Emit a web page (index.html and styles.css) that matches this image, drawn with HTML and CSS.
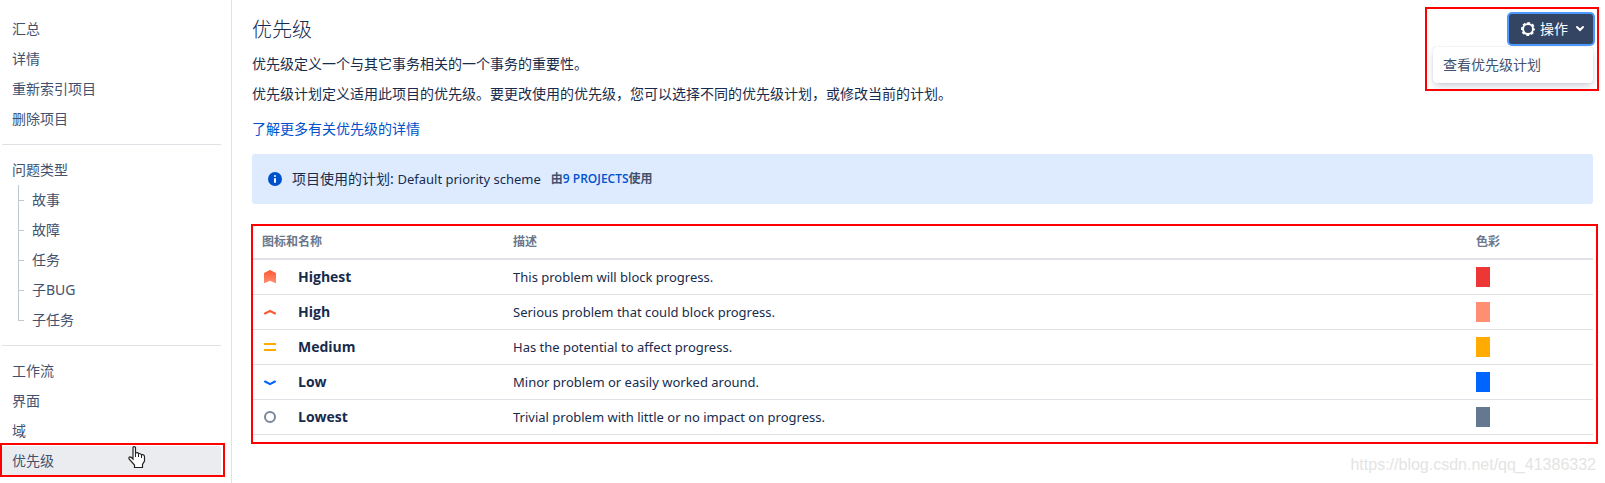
FILE: index.html
```html
<!DOCTYPE html>
<html lang="zh-CN">
<head>
    <meta charset="UTF-8">
    <meta name="viewport" content="width=device-width, initial-scale=1.0">
    <title>优先级</title>
    <link rel="stylesheet" href="styles.css">
</head>
<body>
    <nav class="sidebar">
        <ul class="nav-group">
            <li><a href="#">汇总</a></li>
            <li><a href="#">详情</a></li>
            <li><a href="#">重新索引项目</a></li>
            <li><a href="#">删除项目</a></li>
        </ul>
        <ul class="nav-group">
            <li>
                <a href="#">问题类型</a>
                <ul class="tree">
                    <li><a href="#">故事</a></li>
                    <li><a href="#">故障</a></li>
                    <li><a href="#">任务</a></li>
                    <li><a href="#">子BUG</a></li>
                    <li><a href="#">子任务</a></li>
                </ul>
            </li>
        </ul>
        <ul class="nav-group">
            <li><a href="#">工作流</a></li>
            <li><a href="#">界面</a></li>
            <li><a href="#">域</a></li>
            <li class="selected">
                <a href="#">优先级</a>
                <svg class="pointer" width="18" height="23" viewBox="0 0 18 23">
                    <path d="M5 1.5Q5 .7 6 .7T7.500 1.500V7Q10 6 10.500 7.700Q12.500 7 13.300 8.700Q16.500 8 16.500 11V15L14.500 18.500V21.500H6.500V19L1.500 13.500Q.3 11.500 1.500 11Q3 10.700 5 13Z" fill="#fff" stroke="#222" stroke-width="1.200"/>
                    <path d="M7.500 7V11M10.500 8V11M13.500 9V12" fill="none" stroke="#222"/>
                </svg>
            </li>
        </ul>
    </nav>

    <main class="content">
        <header class="page-header">
            <h1>优先级</h1>
            <div class="actions">
                <button class="actions-btn" type="button">
                    <svg width="16" height="16" viewBox="0 0 16 16">
                        <circle cx="8" cy="8" r="5" fill="none" stroke="#fff" stroke-width="2"/>
                        <circle cx="8" cy="8" r="6" fill="none" stroke="#fff" stroke-width="2" stroke-dasharray="2.700 2.012" stroke-dashoffset="1.350"/>
                    </svg>
                    <span>操作</span>
                    <svg class="arrow" width="10" height="8" viewBox="0 0 10 8">
                        <path d="M2 2L5 5L8 2" fill="none" stroke="#fff" stroke-width="2" stroke-linecap="round"/>
                    </svg>
                </button>
                <div class="menu"><a href="#">查看优先级计划</a></div>
            </div>
        </header>

        <p>优先级定义一个与其它事务相关的一个事务的重要性。</p>
        <p>优先级计划定义适用此项目的优先级。要更改使用的优先级，您可以选择不同的优先级计划，或修改当前的计划。</p>
        <p class="more"><a href="#">了解更多有关优先级的详情</a></p>

        <div class="banner">
            <svg width="14" height="14" viewBox="0 0 14 14">
                <circle cx="7" cy="7" r="7" fill="#0052cc"/>
                <circle cx="7" cy="4" r="1" fill="#fff"/>
                <rect x="6" y="6" width="2" height="5" rx="1" fill="#fff"/>
            </svg>
            <span class="scheme">项目使用的计划: <span class="scheme-name">Default priority scheme</span></span>
            <span class="used-by">由<a href="#">9 PROJECTS</a>使用</span>
        </div>

        <div class="table-wrap">
            <table>
                <colgroup>
                    <col class="col-icon">
                    <col class="col-name">
                    <col>
                    <col class="col-color">
                </colgroup>
                <thead>
                    <tr>
                        <th colspan="2">图标和名称</th>
                        <th>描述</th>
                        <th>色彩</th>
                    </tr>
                </thead>
                <tbody>
                    <tr>
                        <td>
                            <svg width="16" height="16" viewBox="0 0 16 16">
                                <defs>
                                    <linearGradient id="g" x1="0" y1="0" x2="0" y2="1">
                                        <stop offset="0" stop-color="#ff5630"/>
                                        <stop offset="1" stop-color="#ff8f73"/>
                                    </linearGradient>
                                </defs>
                                <path d="M2 4.500Q2 4 2.500 3.700L7.500 1.200Q8 1 8.500 1.200L13.500 3.700Q14 4 14 4.500V13.500Q14 14.500 13 14L8 11.800L3 14Q2 14.500 2 13.500Z" fill="url(#g)"/>
                            </svg>
                        </td>
                        <td class="name">Highest</td>
                        <td class="desc">This problem will block progress.</td>
                        <td><span class="swatch red"></span></td>
                    </tr>
                    <tr>
                        <td>
                            <svg width="16" height="16" viewBox="0 0 16 16">
                                <path d="M3 9.500L8 6.800L13 9.500" fill="none" stroke="#ff5630" stroke-width="2" stroke-linecap="round" stroke-linejoin="round"/>
                            </svg>
                        </td>
                        <td class="name">High</td>
                        <td class="desc">Serious problem that could block progress.</td>
                        <td><span class="swatch salmon"></span></td>
                    </tr>
                    <tr>
                        <td>
                            <svg width="16" height="16" viewBox="0 0 16 16">
                                <path d="M2 5H14M2 11H14" fill="none" stroke="#ffab00" stroke-width="2"/>
                            </svg>
                        </td>
                        <td class="name">Medium</td>
                        <td class="desc">Has the potential to affect progress.</td>
                        <td><span class="swatch yellow"></span></td>
                    </tr>
                    <tr>
                        <td>
                            <svg width="16" height="16" viewBox="0 0 16 16">
                                <path d="M3 7.500L8 10.200L13 7.500" fill="none" stroke="#0065ff" stroke-width="2" stroke-linecap="round" stroke-linejoin="round"/>
                            </svg>
                        </td>
                        <td class="name">Low</td>
                        <td class="desc">Minor problem or easily worked around.</td>
                        <td><span class="swatch blue"></span></td>
                    </tr>
                    <tr>
                        <td>
                            <svg width="16" height="16" viewBox="0 0 16 16">
                                <circle cx="8" cy="8" r="5" fill="none" stroke="#7a869a" stroke-width="2"/>
                            </svg>
                        </td>
                        <td class="name">Lowest</td>
                        <td class="desc">Trivial problem with little or no impact on progress.</td>
                        <td><span class="swatch gray"></span></td>
                    </tr>
                </tbody>
            </table>
        </div>

        <footer class="watermark">https://blog.csdn.net/qq_41386332</footer>
    </main>
</body>
</html>
```
FILE: styles.css
```css
*,
*::before,
*::after {
    box-sizing: border-box;
}

body {
    margin: 0;
    display: flex;
    min-height: 100vh;
    background-color: #fff;
    color: #172b4d;
    font-family: "Noto Sans", "Noto Sans CJK SC", sans-serif;
    font-size: 14px;
    line-height: 20px;
}

a {
    color: #0052cc;
    text-decoration: none;
}

ul {
    list-style: none;
    margin: 0;
    padding: 0;
}

svg {
    display: block;
    flex: none;
}

/* sidebar */
.sidebar {
    flex: none;
    width: 232px;
    padding: 4px 10px 0 2px;
    border-right: 1px solid #dfe1e6;
}

.nav-group {
    padding: 10px 0;
}

.nav-group + .nav-group {
    border-top: 1px solid #dfe1e6;
}

.sidebar a {
    display: block;
    padding: 5px 10px;
    color: #42526e;
}

.tree {
    margin-left: 16px;
}

.tree li {
    position: relative;
    padding-left: 4px;
}

.tree li::before {
    content: "";
    position: absolute;
    left: 0;
    top: 0;
    width: 6px;
    height: 16px;
    border-left: 1px solid #c1c7d0;
    border-bottom: 1px solid #c1c7d0;
}

.tree li:not(:last-child)::after {
    content: "";
    position: absolute;
    left: 0;
    top: 0;
    height: 100%;
    border-left: 1px solid #c1c7d0;
}

.selected {
    position: relative;
    background-color: #ebecf0;
    border-radius: 3px;
}

.selected::after {
    content: "";
    position: absolute;
    inset: -3px -4px -1px -2px;
    border: 2px solid #f00;
}

.pointer {
    position: absolute;
    left: 126px;
    top: 0;
}

/* content */
.content {
    flex: 1;
    padding: 14px 12px 0 20px;
}

.page-header {
    display: flex;
    justify-content: space-between;
    height: 30px;
    margin-bottom: 10px;
}

h1 {
    margin: 0;
    font-size: 20px;
    font-weight: 300;
    line-height: 32px;
}

.actions {
    position: relative;
}

.actions::after {
    content: "";
    position: absolute;
    top: -7px;
    right: -6px;
    width: 174px;
    height: 84px;
    border: 2px solid #f00;
    pointer-events: none;
}

.actions-btn {
    display: flex;
    align-items: center;
    gap: 4px;
    height: 30px;
    padding: 0 8px 0 11px;
    border: 0;
    border-radius: 3px;
    background-color: #344563;
    box-shadow: 0 0 0 2px #4c9aff;
    color: #fff;
    font: inherit;
}

.arrow {
    margin-left: 3px;
}

.menu {
    position: absolute;
    top: 33px;
    right: 0;
    width: 160px;
    padding: 3px 0;
    border-radius: 3px;
    background-color: #fff;
    box-shadow: 0 4px 8px -2px rgba(9, 30, 66, 0.25), 0 0 1px rgba(9, 30, 66, 0.3);
}

.menu a {
    display: block;
    padding: 5px 10px;
    color: #42526e;
}

p {
    margin: 0 0 10px;
}

.more {
    margin: 15px 0;
}

.banner {
    display: flex;
    align-items: center;
    height: 50px;
    padding: 0 16px;
    border-radius: 3px;
    background-color: #deebff;
}

.scheme {
    margin: 0 10px;
}

.scheme-name,
.desc {
    font-size: 13px;
}

.used-by {
    color: #42526e;
    font-family: "Open Sans", "Noto Sans CJK SC", sans-serif;
    font-size: 12px;
    font-weight: 600;
}

.table-wrap {
    position: relative;
    margin-top: 20px;
}

.table-wrap::after {
    content: "";
    position: absolute;
    inset: 0 -5px -9px -1px;
    border: 2px solid #f00;
    pointer-events: none;
}

table {
    width: 100%;
    border-collapse: separate;
    border-spacing: 0;
    table-layout: fixed;
}

th,
td {
    height: 35px;
    padding: 0 10px;
    border-bottom: 1px solid #dfe1e6;
    text-align: left;
}

th {
    height: 36px;
    padding-top: 2px;
    border-bottom-width: 2px;
    color: #6b778c;
    font-size: 12px;
    font-weight: 600;
}

.col-icon {
    width: 36px;
}

.col-name {
    width: 215px;
}

.col-color {
    width: 127px;
}

.name {
    font-family: "Open Sans", sans-serif;
    font-weight: 700;
}

.swatch {
    display: block;
    width: 14px;
    height: 20px;
}

.red {
    background-color: #ed3737;
}

.salmon {
    background-color: #ff8f73;
}

.yellow {
    background-color: #ffab00;
}

.blue {
    background-color: #0065ff;
}

.gray {
    background-color: #64788f;
}

.watermark {
    margin-top: 20px;
    margin-right: -3px;
    color: #e4e4e4;
    font-family: "Liberation Sans", sans-serif;
    font-size: 16px;
    text-align: right;
}
```
